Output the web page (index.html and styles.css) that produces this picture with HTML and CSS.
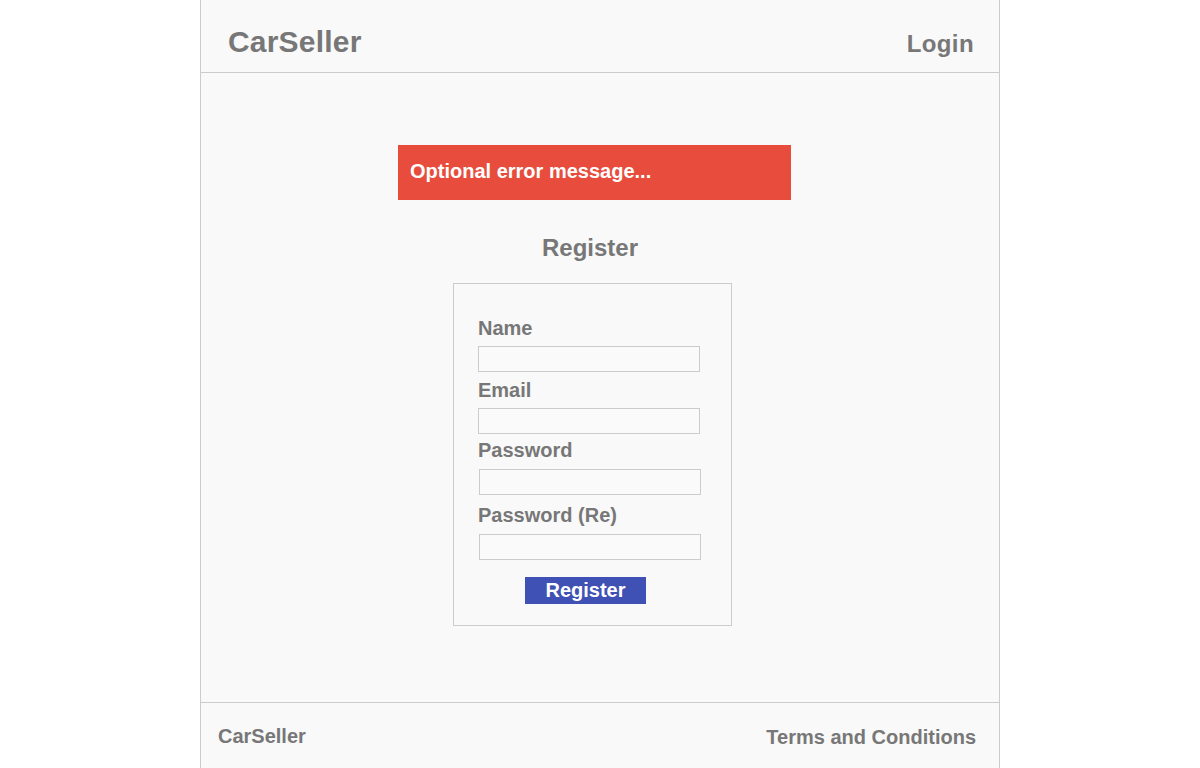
FILE: index.html
```html
<!DOCTYPE html>
<html lang="en">
<head>
<meta charset="utf-8">
<title>CarSeller - Register</title>
<link rel="stylesheet" href="styles.css">
</head>
<body>
<div class="page">
  <header class="site-header">
    <div class="brand">CarSeller</div>
    <a class="login" href="#">Login</a>
  </header>
  <main class="main">
    <div class="error-box">Optional error message...</div>
    <h1 class="title">Register</h1>
    <form class="form-box">
      <label class="label">Name</label>
      <input class="field" type="text">
      <label class="label">Email</label>
      <input class="field" type="text">
      <label class="label label-tight">Password</label>
      <input class="field shift field-loose" type="password">
      <label class="label label-loose">Password (Re)</label>
      <input class="field shift" type="password">
      <button class="btn" type="button">Register</button>
    </form>
  </main>
  <footer class="site-footer">
    <div class="foot-brand">CarSeller</div>
    <a class="terms" href="#">Terms and Conditions</a>
  </footer>
</div>
</body>
</html>
```
FILE: styles.css
```css
* { box-sizing: border-box; }
html, body {
  margin: 0;
  padding: 0;
  background: #ffffff;
  font-family: "Liberation Sans", Arial, sans-serif;
  font-weight: bold;
  color: #777777;
}
.page {
  width: 800px;
  margin-left: 200px;
  min-height: 768px;
  background: #f9f9f9;
  border-left: 1px solid #cccccc;
  border-right: 1px solid #cccccc;
  display: flex;
  flex-direction: column;
}
.site-header {
  height: 73px;
  border-bottom: 1px solid #cccccc;
  display: flex;
  justify-content: space-between;
  align-items: baseline;
  padding: 24px 25px 0 27px;
}
.brand {
  font-size: 30px;
  line-height: 36px;
  letter-spacing: 0.2px;
}
.login {
  font-size: 24px;
  line-height: 36px;
  letter-spacing: 0.4px;
  color: #777777;
  text-decoration: none;
}
.main {
  flex: 1;
  padding-top: 72px;
  display: flex;
  flex-direction: column;
}
.error-box {
  margin-left: 197px;
  width: 393px;
  height: 55px;
  background: #e74c3c;
  color: #ffffff;
  font-size: 20px;
  line-height: 24px;
  padding: 14px 12px 0 12px;
}
.title {
  margin: 34px 20px 0 0;
  font-size: 24px;
  line-height: 28px;
  text-align: center;
  font-weight: bold;
  color: #777777;
}
.form-box {
  margin: 21px 0 0 252px;
  width: 279px;
  border: 1px solid #cccccc;
  padding: 32px 24px 21px 24px;
  display: flex;
  flex-direction: column;
  align-items: flex-start;
}
.label {
  font-size: 20px;
  line-height: 24px;
  margin-bottom: 6px;
}
.label-tight {
  margin-top: -2px;
  margin-bottom: 7px;
}
.label-loose {
  margin-bottom: 7px;
}
.field {
  width: 222px;
  height: 26px;
  border: 1px solid #cccccc;
  background: #fafafa;
  margin: 0 0 6px 0;
  padding: 0;
  outline: none;
}
.field.shift {
  margin-left: 1px;
}
.field.field-loose {
  margin-bottom: 8px;
}
.btn {
  margin: 11px 0 0 47px;
  width: 121px;
  height: 27px;
  border: none;
  padding: 0;
  background: #3f51b5;
  color: #ffffff;
  font-family: "Liberation Sans", Arial, sans-serif;
  font-weight: bold;
  font-size: 20px;
  line-height: 27px;
}
.site-footer {
  height: 66px;
  border-top: 1px solid #cccccc;
  display: flex;
  justify-content: space-between;
  align-items: flex-start;
  padding: 21px 23px 0 17px;
}
.foot-brand {
  font-size: 20px;
  line-height: 24px;
}
.terms {
  margin-top: 1px;
  font-size: 20px;
  line-height: 24px;
  color: #777777;
  text-decoration: none;
}
```
